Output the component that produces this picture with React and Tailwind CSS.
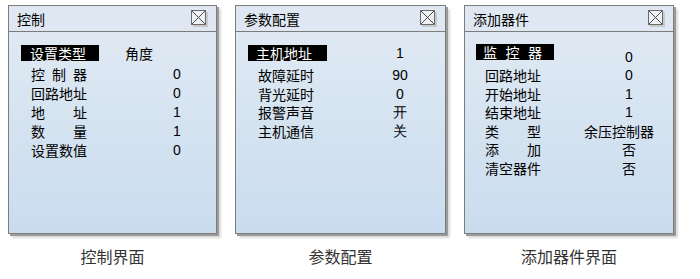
import React from "react";

const cjk = "font-['Noto_Sans_CJK_SC','Noto_Sans_CJK_SC',sans-serif]";

const CloseBox = () => (
  <svg width="17" height="17" viewBox="0 0 17 17" className="block">
    <rect x="2" y="2" width="15" height="15" fill="#c9c9c9" />
    <rect x="0.5" y="0.5" width="14" height="14" fill="#eef2f6" stroke="#6b6b6b" />
    <path d="M1 1 L14 14 M14 1 L1 14" stroke="#4a4a4a" strokeWidth="1" />
  </svg>
);

// label: text, spread = justify the chars across 56px
const Label = ({ text, spread }) =>
  spread ? (
    <div className="flex w-[56px] justify-between">
      {text.split("").map((c, i) => (
        <span key={i}>{c}</span>
      ))}
    </div>
  ) : (
    <div className="whitespace-nowrap">{text}</div>
  );

const Panel = ({ title, width, children }) => (
  <div className={`flex flex-col ${width}`}>
    <div className="h-[229px] border border-[#7c7c7c] shadow-[2px_2px_0_#9a9a9a,4px_4px_2px_#dadada] flex flex-col">
      <div className="h-[26px] shrink-0 bg-[#dfe8f2] border-b border-[#7c7c7c] flex items-center justify-between pl-[8px] pr-[8px]">
        <span className="text-[14px] text-black leading-none">{title}</span>
        <CloseBox />
      </div>
      <div className="flex-1 bg-gradient-to-b from-[#dfe9f3] to-[#c9dcee] pt-[12px] text-[14px] text-black leading-none">
        {children}
      </div>
    </div>
  </div>
);

const num = "font-['Liberation_Sans',sans-serif]";

export default function App() {
  return (
    <div className={`w-[700px] h-[279px] bg-white ${cjk}`}>
      <div className="flex pt-[5px] pl-[8px] gap-[18px]">
        {/* 控制界面 */}
        <div className="flex flex-col items-center">
          <Panel title="控制" width="w-[209px]">
            <div className="pl-[12px]">
              <div className="flex items-center h-[17px]">
                <div className="w-[78px] h-[16px] shrink-0 bg-black text-white pl-[9px] flex items-center">设置类型</div>
                <div className="pl-[26px]">角度</div>
              </div>
              <div className="mt-[3px] pl-[10px]">
                {[
                  ["控制器", true, "0"],
                  ["回路地址", false, "0"],
                  ["地址", true, "1"],
                  ["数量", true, "1"],
                  ["设置数值", false, "0"],
                ].map(([t, s, v]) => (
                  <div key={t} className="flex items-center h-[19px]">
                    <div className="w-[142px] shrink-0">
                      <Label text={t} spread={s} />
                    </div>
                    <div className={num}>{v}</div>
                  </div>
                ))}
              </div>
            </div>
          </Panel>
          <div className="mt-[12px] text-[16px] text-[#333] leading-[20px]">控制界面</div>
        </div>

        {/* 参数配置 */}
        <div className="flex flex-col items-center">
          <Panel title="参数配置" width="w-[211px]">
            <div className="pl-[12px]">
              <div className="flex items-center h-[17px]">
                <div className="w-[79px] h-[16px] shrink-0 bg-black text-white pl-[8px] flex items-center">主机地址</div>
                <div className={`ml-[38px] w-[70px] shrink-0 text-center ${num}`}>1</div>
              </div>
              <div className="mt-[5px] pl-[10px]">
                {[
                  ["故障延时", "90"],
                  ["背光延时", "0"],
                  ["报警声音", "开"],
                  ["主机通信", "关"],
                ].map(([t, v]) => (
                  <div key={t} className="flex items-center h-[18.5px]">
                    <div className="w-[107px] shrink-0">{t}</div>
                    <div className={`w-[70px] shrink-0 text-center ${num}`}>{v}</div>
                  </div>
                ))}
              </div>
            </div>
          </Panel>
          <div className="mt-[12px] text-[16px] text-[#333] leading-[20px]">参数配置</div>
        </div>

        {/* 添加器件界面 */}
        <div className="flex flex-col items-center">
          <Panel title="添加器件" width="w-[210px]">
            <div className="pl-[11px]">
              <div className="flex items-start h-[17px]">
                <div className="w-[78px] h-[16px] shrink-0 bg-black text-white pl-[7px] pr-[12px] flex items-center">
                  <div className="flex flex-1 justify-between">
                    <span>监</span>
                    <span>控</span>
                    <span>器</span>
                  </div>
                </div>
                <div className={`ml-[35px] w-[80px] shrink-0 text-center pt-[6px] ${num}`}>0</div>
              </div>
              <div className="mt-[5px] pl-[9px]">
                {[
                  ["回路地址", false, "0", num],
                  ["开始地址", false, "1", num],
                  ["结束地址", false, "1", num],
                  ["类型", true, "余压控制器", "-ml-[10px]"],
                  ["添加", true, "否", ""],
                  ["清空器件", false, "否", ""],
                ].map(([t, s, v, extra]) => (
                  <div key={t} className="flex items-center h-[18.5px]">
                    <div className="w-[104px] shrink-0">
                      <Label text={t} spread={s} />
                    </div>
                    <div className={`w-[80px] shrink-0 text-center whitespace-nowrap ${extra}`}>{v}</div>
                  </div>
                ))}
              </div>
            </div>
          </Panel>
          <div className="mt-[12px] text-[16px] text-[#333] leading-[20px]">添加器件界面</div>
        </div>
      </div>
    </div>
  );
}
